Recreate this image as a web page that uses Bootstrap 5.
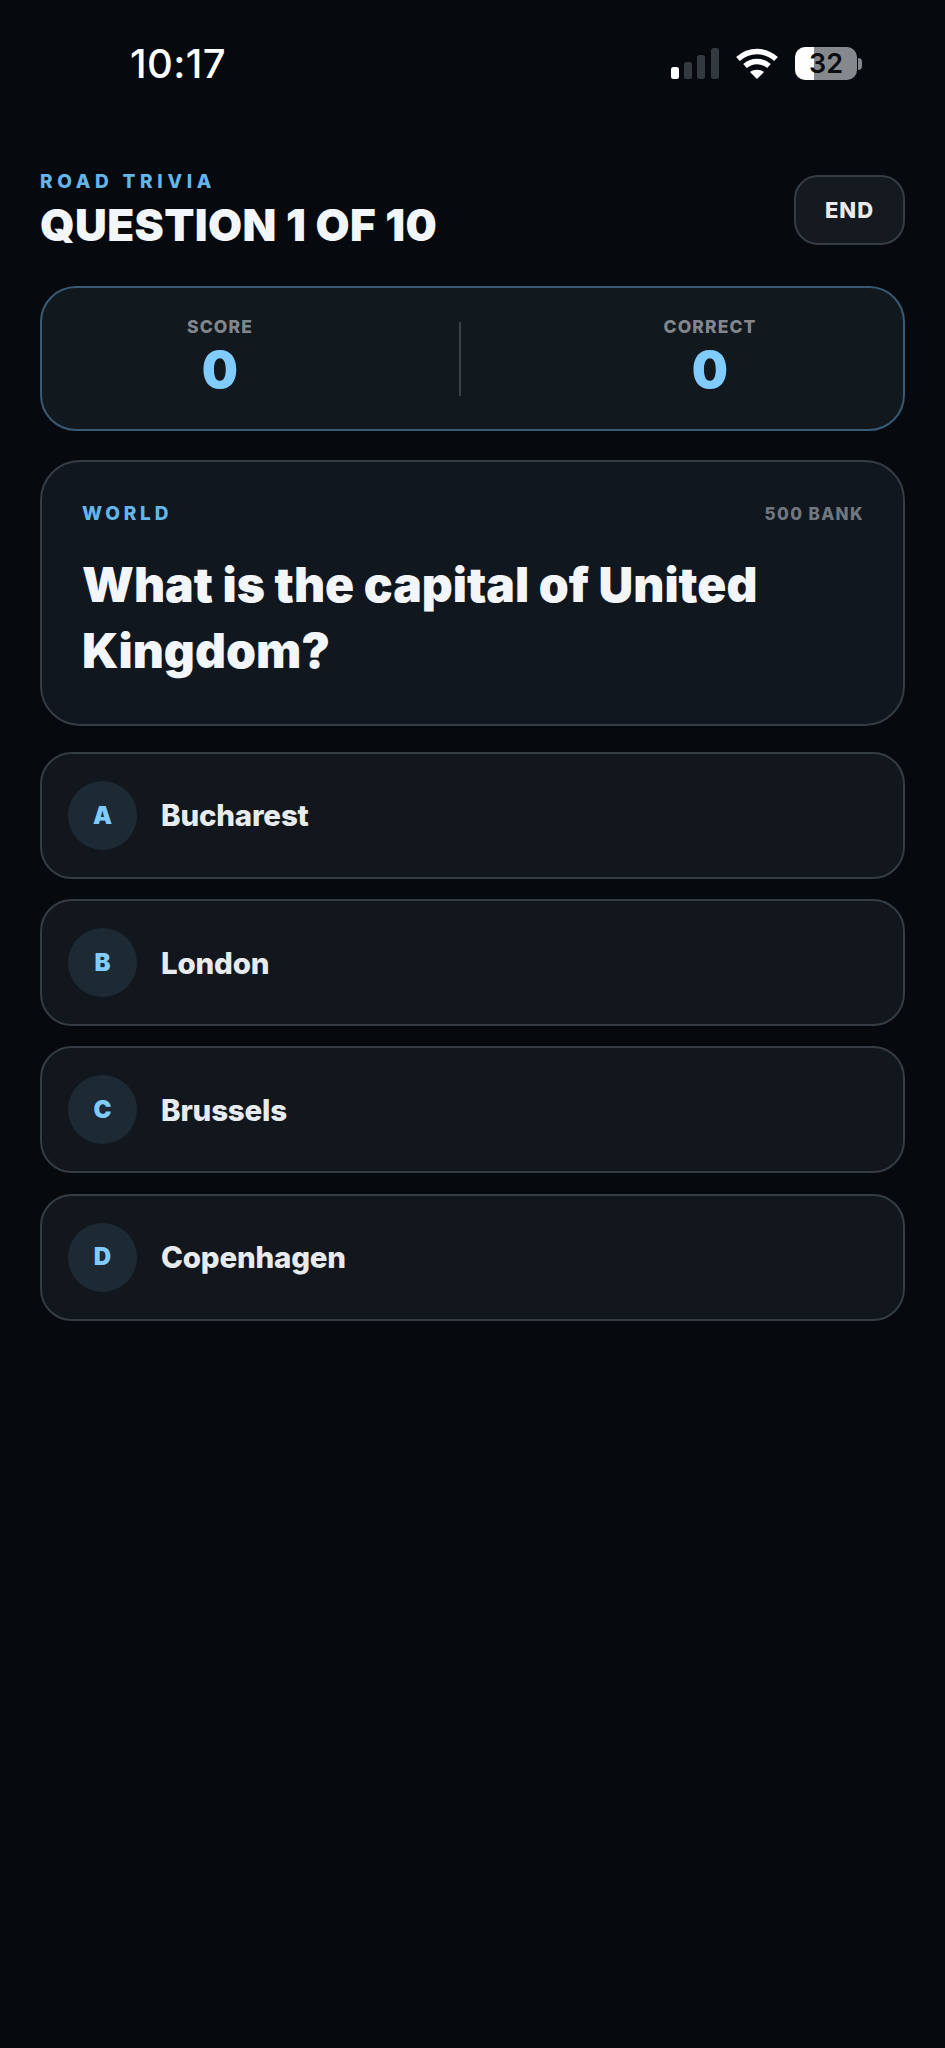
<!doctype html>
<html lang="en"><head><meta charset="utf-8">
<link href="https://cdn.jsdelivr.net/npm/bootstrap@5.3.0/dist/css/bootstrap.min.css" rel="stylesheet">
<style>
html,body{background:#06090d;font-family:Inter,"Liberation Sans",sans-serif;}
.app{width:945px;height:2048px;padding:0 40px;overflow:hidden;}
.status{height:128px;padding:45px 43px 0 90px;}
.clock{font-size:40px;font-weight:500;line-height:38px;color:#fff;letter-spacing:.4px;}
.sysicons{height:33px;margin-top:2px;}
.batt{width:62px;height:33px;border-radius:10px;background:linear-gradient(90deg,#fff 0 30%,#85888c 30% 100%);color:#0b0d11;font-size:27px;font-weight:600;line-height:33px;text-align:center;}
.nub{width:4px;height:12px;border-radius:0 4px 4px 0;background:#85888c;margin-left:1px;}
.head{height:118px;padding-top:43px;}
.eyebrow{color:#64b5ea;font-weight:800;font-size:19px;letter-spacing:4.7px;line-height:22px;}
.qnum{color:#f3f6f9;font-weight:900;font-size:44px;letter-spacing:.4px;line-height:50px;margin-top:7px;}
.endbtn{width:111px;height:70px;margin-top:4px;background:#141a20;border:2px solid #343c44;border-radius:24px;color:#e8ebee;font-weight:800;font-size:22px;letter-spacing:1px;padding:0;}
.endbtn:hover{background:#141a20;color:#e8ebee;border-color:#343c44;}
.scorebox{height:145px;margin-top:40px;background:#11181e;border:2px solid #385a75;border-radius:36px;}
.stat{text-align:center;padding-bottom:2px;flex:none;}
.statleft{width:356px;margin-right:61px;}
.statright{width:300px;margin-left:99px;}
.statlabel{color:#80868c;font-weight:800;font-size:17.5px;letter-spacing:1.1px;line-height:20px;}
.statnum{color:#80ccff;font-weight:900;font-size:51px;line-height:56px;margin-top:5px;}
.vline{width:2px;height:74px;background:#3a4249;flex:none;}
.qcard{height:266px;margin-top:29px;background:#11171e;border:2px solid #343c44;border-radius:40px;padding:41px 39px 0 40px;}
.cat{color:#64b5ea;font-weight:800;font-size:19px;letter-spacing:3.8px;line-height:22px;}
.bank{color:#71777e;font-weight:800;font-size:17px;letter-spacing:1.4px;line-height:22px;}
.qtext{color:#f3f6f9;font-weight:900;font-size:48px;line-height:66px;margin:27px 0 0;}
.optlist{margin-top:26px;gap:20.2px;}
.opt{height:127px;background:#11171d;border:2px solid #343c44;border-radius:32px;padding:0 26px;gap:24px;}
.letter{width:69px;height:69px;background:#1d2a34;color:#80ccff;font-weight:900;font-size:24px;flex:none;}
.optname{color:#e8ebee;font-weight:800;font-size:29.5px;letter-spacing:-.2px;}
</style></head>
<body>
<div class="app">
  <div class="status d-flex justify-content-between align-items-start">
    <div class="clock">10:17</div>
    <div class="d-flex align-items-center gap-3 sysicons">
      <svg width="48" height="31" viewBox="0 0 48 31"><rect x="0" y="19" width="8" height="12" rx="2.5" fill="#fff"/><rect x="13" y="14" width="8" height="17" rx="2.5" fill="#32393f"/><rect x="26" y="7" width="8" height="24" rx="2.5" fill="#32393f"/><rect x="40" y="0" width="8" height="31" rx="2.5" fill="#32393f"/></svg>
      <svg width="44" height="31" viewBox="0 0 44 31" fill="none" stroke="#fff" stroke-width="5.5"><path d="M3 11C14 1 30 1 41 11"/><path d="M10 18C17 12 27 12 34 18"/><path d="M22 31l-7-7c4-3 10-3 14 0z" fill="#fff" stroke="none"/></svg>
      <div class="d-flex align-items-center"><div class="batt">32</div><div class="nub"></div></div>
    </div>
  </div>
  <div class="head d-flex justify-content-between align-items-start">
    <div>
      <div class="eyebrow">ROAD TRIVIA</div>
      <div class="qnum">QUESTION 1 OF 10</div>
    </div>
    <button type="button" class="btn endbtn">END</button>
  </div>
  <div class="scorebox d-flex align-items-center">
    <div class="stat statleft"><div class="statlabel">SCORE</div><div class="statnum">0</div></div>
    <div class="vline"></div>
    <div class="stat statright"><div class="statlabel">CORRECT</div><div class="statnum">0</div></div>
  </div>
  <div class="qcard">
    <div class="d-flex justify-content-between"><span class="cat">WORLD</span><span class="bank">500 BANK</span></div>
    <p class="qtext">What is the capital of United Kingdom?</p>
  </div>
  <div class="optlist d-flex flex-column">
    <div class="opt d-flex align-items-center"><div class="letter rounded-circle d-flex align-items-center justify-content-center">A</div><div class="optname">Bucharest</div></div>
    <div class="opt d-flex align-items-center"><div class="letter rounded-circle d-flex align-items-center justify-content-center">B</div><div class="optname">London</div></div>
    <div class="opt d-flex align-items-center"><div class="letter rounded-circle d-flex align-items-center justify-content-center">C</div><div class="optname">Brussels</div></div>
    <div class="opt d-flex align-items-center"><div class="letter rounded-circle d-flex align-items-center justify-content-center">D</div><div class="optname">Copenhagen</div></div>
  </div>
</div>
</body></html>
